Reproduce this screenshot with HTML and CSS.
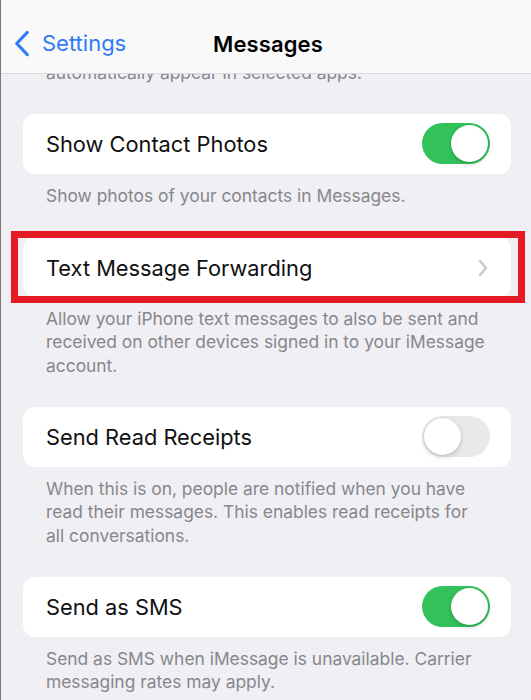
FILE: index.html
```html
<!DOCTYPE html>
<html lang="en">
<head>
<meta charset="utf-8">
<title>Messages</title>
<link rel="stylesheet" href="styles.css">
</head>
<body>
<div class="screen">
  <header class="navbar">
    <a class="back" href="#">
      <svg class="back-chevron" viewBox="0 0 18 28" aria-hidden="true">
        <path d="M14.5 2.5 L3.5 14 L14.5 25.5" fill="none" stroke="currentColor" stroke-width="3.2" stroke-linecap="round" stroke-linejoin="round"/>
      </svg>
      <span>Settings</span>
    </a>
    <h1 class="title">Messages</h1>
  </header>

  <main class="list">
    <p class="footer scrolled">automatically appear in selected apps.</p>

    <section class="group">
      <div class="cell">
        <span class="label">Show Contact Photos</span>
        <span class="switch on"><span class="knob"></span></span>
      </div>
      <p class="footer">Show photos of your contacts in Messages.</p>
    </section>

    <section class="group">
      <div class="cell highlighted">
        <span class="label">Text Message Forwarding</span>
        <svg class="disclosure" viewBox="0 0 10 18" aria-hidden="true">
          <path d="M2 2 L8 9 L2 16" fill="none" stroke="currentColor" stroke-width="2.2" stroke-linecap="round" stroke-linejoin="round"/>
        </svg>
        <span class="callout"></span>
      </div>
      <p class="footer">Allow your iPhone text messages to also be sent and received on other devices signed in to your iMessage account.</p>
    </section>

    <section class="group">
      <div class="cell">
        <span class="label">Send Read Receipts</span>
        <span class="switch"><span class="knob"></span></span>
      </div>
      <p class="footer">When this is on, people are notified when you have read their messages. This enables read receipts for all conversations.</p>
    </section>

    <section class="group">
      <div class="cell">
        <span class="label">Send as SMS</span>
        <span class="switch on"><span class="knob"></span></span>
      </div>
      <p class="footer">Send as SMS when iMessage is unavailable. Carrier messaging rates may apply.</p>
    </section>
  </main>
</div>
</body>
</html>
```

FILE: styles.css
```css
* {
  box-sizing: border-box;
}

html, body {
  margin: 0;
  padding: 0;
  height: 100%;
}

body {
  background: #efeff4;
  font-family: Inter, "Noto Sans", "Liberation Sans", sans-serif;
  color: #111;
  overflow: hidden;
}

.screen {
  height: 700px;
  border-left: 1px solid #7a7a7a;
  background: #efeff4;
  display: flex;
  flex-direction: column;
  overflow: hidden;
}

.navbar {
  position: relative;
  flex: none;
  height: 74px;
  background: #f9f9f9;
  border-bottom: 1px solid #d9d9dc;
  display: flex;
  align-items: center;
  justify-content: center;
}

.back {
  position: absolute;
  left: 12px;
  top: 30px;
  display: flex;
  align-items: center;
  gap: 11px;
  color: #2f7bf5;
  text-decoration: none;
  font-size: 22px;
  line-height: 27px;
}

.back-chevron {
  width: 18px;
  height: 27px;
}

.title {
  margin: 14px 0 0 4px;
  font-size: 22px;
  font-weight: 600;
  letter-spacing: 0.1px;
  color: #000;
}

/* scrolled settings list; its top edge clips under the bar */
.list {
  flex: 1;
  overflow: hidden;
  padding: 0 20px 0 22px;
}

.group {
  display: flex;
  flex-direction: column;
}

.footer {
  margin: 0 0 30px;
  padding: 0 23px 0 23px;
  font-size: 17.4px;
  line-height: 23.3px;
  color: #87878c;
}

.footer.scrolled {
  margin-top: -13.5px;
  margin-bottom: 30px;
}

.cell {
  position: relative;
  height: 60px;
  background: #fff;
  border-radius: 12px;
  display: flex;
  align-items: center;
  justify-content: space-between;
  padding: 1px 21px 0 23px;
}

.cell + .footer {
  padding-top: 10px;
}

.label {
  font-size: 21.8px;
  color: #111;
}

.disclosure {
  width: 10px;
  height: 18px;
  margin-right: 2px;
  color: #c4c4c7;
}

/* red annotation frame around the highlighted row */
.callout {
  position: absolute;
  top: -6px;
  bottom: -6px;
  left: -12px;
  right: -14px;
  border: 7px solid #e41b25;
  pointer-events: none;
}

.switch {
  position: relative;
  width: 68px;
  height: 41px;
  border-radius: 21px;
  background: #e9e9eb;
  flex: none;
  margin-top: -2px;
}

.switch.on {
  background: #33c25a;
}

.knob {
  position: absolute;
  top: 2px;
  left: 2px;
  width: 37px;
  height: 37px;
  border-radius: 50%;
  background: #fff;
  box-shadow: 0 2px 5px rgba(0, 0, 0, 0.18), 0 0 0 0.5px rgba(0, 0, 0, 0.06);
}

.switch.on .knob {
  left: auto;
  right: 2px;
}
```
